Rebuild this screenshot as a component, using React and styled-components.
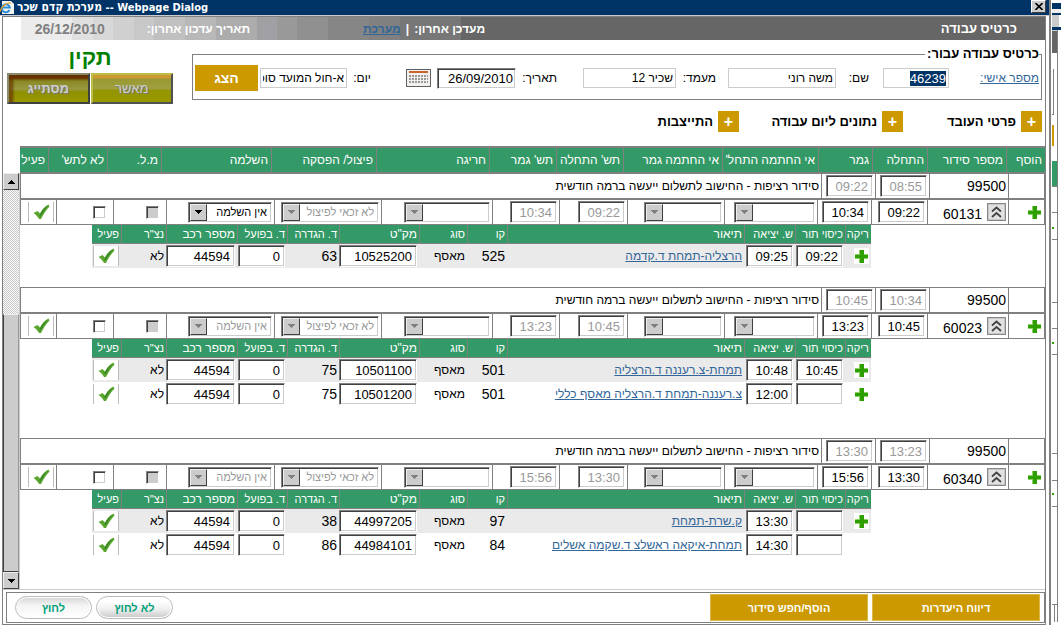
import React, { useEffect, useRef } from "react";
import styled, { createGlobalStyle } from "styled-components";

const navy = "#003366";
const green = "#339966";
const gold = "#cc9900";
const line = "#808080";
const pale = "#cccccc";
const link = "#336699";

const Global = createGlobalStyle`
  *, *::before, *::after { box-sizing: border-box; }
  html, body { margin: 0; padding: 0; background: #fff; }
  body { font-family: "Liberation Sans", Arial, sans-serif; font-size: 13px; color: #000; }
  button, input, select { font: inherit; margin: 0; border-radius: 0; }
  button { padding: 0; }
  table { border-collapse: separate; border-spacing: 0; table-layout: fixed; width: 100%; }
  ::selection { background: ${navy}; color: #fff; }
`;

const Desktop = styled.div`
  display: flex;
  min-height: 100vh;
`;

const Dialog = styled.main`
  flex: 1;
  min-width: 0;
  display: flex;
  flex-direction: column;
  border-right: 2px solid ${line};
`;

const TitleBar = styled.header`
  display: flex;
  align-items: center;
  height: 16px;
  padding: 0 3px 0 0;
  background: ${navy};
  border-bottom: 1px solid ${pale};
  color: #fff;
`;

const WindowTitle = styled.h1`
  flex: 1;
  margin: 0 0 0 2px;
  font-family: "DejaVu Sans Condensed", "Liberation Sans", sans-serif;
  font-size: 11px;
  line-height: 15px;
  font-weight: bold;
  white-space: nowrap;
`;

const SystemName = styled.span`
  font-size: 12px;
`;

const WindowButton = styled.button`
  width: 15px;
  height: 13px;
  margin-bottom: 2px;
  display: grid;
  place-items: center;
  background: ${pale};
  border: 1px solid;
  border-color: #fff #404040 #404040 #fff;
`;

const Frame = styled.div`
  flex: 1;
  display: flex;
  flex-direction: column;
  margin: 0 3px 0 2px;
  border: 1px solid ${line};
  direction: rtl;
`;

const InfoBar = styled.div`
  display: flex;
  align-items: center;
  height: 23px;
  margin-left: 18px;
  padding-right: 28px;
  color: #fff;
  font-size: 12px;
  font-weight: bold;
  white-space: nowrap;
  background: linear-gradient(
    to right,
    #ececec 0 5%, #e0e0e0 5% 7%, #d8d8d8 7% 9%, #d0d0d0 9% 11%,
    #c8c8c8 11% 13%, #c0c0c0 13% 16%, #b8b8b8 16% 19%, #acacac 19% 23%,
    #a0a0a4 23% 25%, #999 25% 27%, #909090 27% 30%, #868686 30% 34%,
    #808080 34% 37%, #777 37% 43%, #666 43%
  );
`;

const InfoTitle = styled.span`
  flex: 0 0 53%;
  font-size: 13px;
`;

const InfoEditor = styled.span`
  flex: 0 0 24%;
  display: flex;
  gap: 5px;
  padding-right: 4px;
  a { color: ${link}; }
`;

const InfoDate = styled.time`
  margin-right: 42px;
  color: ${line};
  font-size: 14px;
`;

const TopPanel = styled.section`
  display: flex;
  align-items: flex-start;
  gap: 19px;
  padding: 6px 3px 7px 4px;
`;

const Search = styled.fieldset`
  flex: 1;
  min-width: 0;
  display: flex;
  align-items: center;
  margin: 0;
  padding: 3px 2px 8px;
  border: 1px solid ${line};
`;

const Legend = styled.legend`
  padding: 0 0 0 2px;
  font-size: 13px;
  line-height: 16px;
  font-weight: bold;
`;

const Field = styled.label`
  flex: ${(p) => p.$w} 1 ${(p) => p.$w}px;
  min-width: 0;
  padding-right: ${(p) => p.$lead || 0}px;
  font-size: 12px;
  white-space: nowrap;
  a { color: ${link}; }
`;

const PlainInput = styled.input`
  flex: ${(p) => p.$w} 1 ${(p) => p.$w}px;
  width: 0;
  min-width: 0;
  height: 20px;
  padding: 0 2px;
  border: 1px solid ${pale};
  background: #fff;
  font-size: ${(p) => (p.$digits ? 13 : 12)}px;
  text-align: right;
  outline: none;
`;

const bevel = `
  border: 1px solid;
  border-color: ${line} #fff #fff ${line};
  box-shadow: inset 1px 1px #404040, inset -1px -1px ${pale};
  background: #fff;
  outline: none;
`;

const DateInput = styled(PlainInput)`
  ${bevel}
  height: 21px;
  direction: ltr;
`;

const CalendarSlot = styled.span`
  flex: 31 1 31px;
  display: flex;
  padding-right: 6px;
`;

const IconButton = styled.button`
  display: grid;
  place-items: center;
  border: 0;
  background: none;
`;

const ShowButton = styled.button`
  flex: 63 1 63px;
  height: 26px;
  margin-right: 2px;
  border: 0;
  background: ${gold};
  color: #fff;
  font-size: 14px;
  font-weight: bold;
`;

const Status = styled.div`
  flex: 0 0 166px;
`;

const StatusText = styled.strong`
  display: block;
  height: 27px;
  line-height: 24px;
  font-size: 22px;
  text-align: center;
  color: #008000;
`;

const StatusButtons = styled.div`
  display: flex;
  gap: 1px;
`;

const StatusButton = styled.button`
  flex: 1;
  height: 31px;
  border: 2px solid;
  border-color: ${(p) => (p.$pressed ? "#8a8a70 #404040 #404040 #8a8a70" : "#bdbd4a #505050 #505050 #bdbd4a")};
  background: ${(p) =>
    p.$pressed
      ? "linear-gradient(to right, #663300aa 0 3px, transparent 6px), linear-gradient(#663300 0 3px, #888822 6px, #999944 14px, #8f8f00 17px, #999900)"
      : "linear-gradient(#cc9933 0 3px, #999933 4px, #a0a040 14px, #949400 15px, #999900)"};
  color: ${pale};
  font-size: 13px;
  font-weight: ${(p) => (p.$pressed ? "bold" : "normal")};
  text-shadow: 1px 1px #777;
`;

const Sections = styled.nav`
  display: flex;
  height: 21px;
  margin: 0 3px 14px;
`;

const Section = styled.div`
  flex: 0 0 ${(p) => p.$w}px;
  display: flex;
  align-items: center;
  gap: 5px;
  font-size: 13px;
  font-weight: bold;
  white-space: nowrap;
`;

const ExpandButton = styled.button`
  width: 21px;
  height: 21px;
  border: 0;
  background: ${gold};
  color: #fff;
  font-size: 16px;
  line-height: 16px;
  font-weight: bold;
`;

const HeadWrap = styled.div`
  margin-left: 17px;
  border: 1px solid ${line};
  border-width: 1px 0 1px 1px;
`;

const HeadCell = styled.th`
  height: 25px;
  padding: 0 3px 0 0;
  background: ${green};
  border: 1px solid ${line};
  border-width: 1px 0 0 1px;
  color: #fff;
  font-size: 12px;
  font-weight: normal;
  text-align: right;
  white-space: nowrap;
  &:last-child { border-left: 0; }
`;

const Scroller = styled.div`
  flex: 1;
  display: flex;
`;

const Groups = styled.div`
  flex: 1;
  min-width: 0;
`;

const Group = styled.section`
  padding-bottom: ${(p) => p.$space}px;
`;

const Cell = styled.td`
  height: 26px;
  padding: 0 2px 0 0;
  border: 1px solid ${line};
  border-width: 1px 0 1px 1px;
  text-align: right;
  font-size: ${(p) => (p.$text ? 12 : 14)}px;
  white-space: nowrap;
  &:first-child { border-right-width: 1px; }
`;

const TimeInput = styled.input`
  ${bevel}
  display: block;
  width: ${(p) => p.$w || "47px"};
  height: 22px;
  padding: 0 4px 0 0;
  direction: ltr;
  text-align: right;
  font-size: 13px;
  &:disabled { color: #999; }
`;

const NumberCell = styled.div`
  display: flex;
  align-items: flex-end;
  gap: 5px;
  line-height: 14px;
`;

const SelectBox = styled.span`
  position: relative;
  display: block;
  width: ${(p) => p.$w}%;
`;

const Select = styled.select`
  ${bevel}
  display: block;
  width: 100%;
  height: 21px;
  padding: 0 4px 0 18px;
  appearance: none;
  font-size: 11px;
  color: #000;
  &:disabled { color: #999; opacity: 1; }
`;

const SelectArrow = styled.span`
  position: absolute;
  left: 2px;
  top: 2px;
  width: 17px;
  height: 17px;
  display: grid;
  place-items: center;
  background: ${pale};
  border: 1px solid;
  border-color: #eee #404040 #404040 #eee;
  pointer-events: none;
`;

const Tick = styled.input`
  ${bevel}
  display: block;
  appearance: none;
  width: 13px;
  height: 13px;
  margin-right: 5px;
  &:disabled { background: ${pale}; }
`;

const ActiveMark = styled.button`
  display: grid;
  place-items: center;
  width: 26px;
  height: 20px;
  background: #fff;
  border: 1px solid #bbb;
  border-width: 0 1px;
`;

const Trips = styled.div`
  padding: 0 174px 0 72px;
`;

const TripHead = styled.th`
  height: 19px;
  padding: 0 2px 0 0;
  background: ${green};
  border: 1px solid ${line};
  border-width: 0 0 1px 1px;
  color: #fff;
  font-size: ${(p) => (p.$tight ? 11 : 12)}px;
  font-weight: normal;
  text-align: right;
  white-space: nowrap;
  &:last-child { border-left: 0; }
`;

const TripRow = styled.tr`
  background: ${(p) => (p.$shaded ? "#eaeaea" : "#fff")};
`;

const TripCell = styled.td`
  height: 24px;
  padding: 0 2px 0 0;
  text-align: right;
  font-size: ${(p) => (p.$text ? 12 : 14)}px;
  white-space: nowrap;
  a { color: ${link}; }
`;

const PlusBox = styled.button`
  display: grid;
  place-items: center;
  width: 15px;
  height: 16px;
  border: 0;
  background: #fff;
`;

const ScrollBar = styled.div`
  flex: 0 0 17px;
  display: flex;
  flex-direction: column;
  border-right: 1px solid ${pale};
  background: repeating-conic-gradient(#fff 0 25%, #c4c4c4 0 50%) 0 0 / 2px 2px;
`;

const ScrollButton = styled.button`
  width: 16px;
  height: 17px;
  display: grid;
  place-items: center;
  background: ${pale};
  border: 1px solid;
  border-color: #eee #404040 #404040 #eee;
`;

const ScrollSpace = styled.div`
  flex: 125;
`;

const ScrollThumb = styled.div`
  flex: 258;
  background: ${pale};
  border: 1px solid;
  border-color: #eee #999 #404040 #404040;
`;

const Footer = styled.footer`
  border-top: 1px solid ${pale};
  padding: 2px 0 1px 3px;
`;

const FooterRow = styled.div`
  display: flex;
  align-items: center;
  gap: 4px;
  height: 31px;
  padding: 0 4px 0 8px;
  border: 1px solid ${line};
`;

const FooterButton = styled.button`
  flex: 0 0 ${(p) => p.$w}px;
  height: 27px;
  border: 1px solid #dcb84a;
  background: ${gold};
  color: #fff;
  font-size: 11px;
  font-weight: bold;
`;

const Spacer = styled.span`
  flex: 1;
`;

const PillButton = styled.button`
  width: 77px;
  height: 23px;
  border: 1px solid #bbb;
  border-radius: 12px;
  background: ${(p) =>
    p.$hot
      ? "linear-gradient(#fff 20%, #eee 60%, #c8c8c8)"
      : "linear-gradient(#d4d4d4, #f4f4f4 40%, #fff)"};
  box-shadow: inset 0 0 0 1px #fff;
  color: #00a078;
  font-size: 11px;
  font-weight: bold;
`;

const Behind = styled.aside`
  flex: 0 0 9px;
  margin-left: 1px;
  overflow: hidden;
`;

const Strip = styled.div`
  height: ${(p) => p.$h}px;
  width: ${(p) => p.$w || "100%"};
  background: ${(p) => p.$c || "#fff"};
  border-right: ${(p) => (p.$edge ? `1px solid ${line}` : "0")};
  border-bottom: ${(p) => (p.$under ? `1px solid ${line}` : "0")};
`;

const StripRow = styled.div`
  width: 6px;
  border-right: 1px solid ${line};
`;

const Arrow = ({ up, dim }) => (
  <svg width="7" height="4" viewBox="0 0 7 4" shapeRendering="crispEdges" aria-hidden="true">
    <path d={up ? "M0 4h7L3.500 0z" : "M0 0h7L3.500 4z"} fill={dim ? "#808080" : "#000"} />
  </svg>
);

const Check = () => (
  <svg width="17" height="16" viewBox="0 0 17 16" aria-hidden="true">
    <path d="M.5 9 4.500 7 7 9.500C8.500 6 11.500 2.500 15.500.5L16.500 2.500C13 6 10.500 10 8 15H6C4.500 12.500 3 10.500.5 9z" fill="#5aa52e" />
    <path d="M6.500 11C9 6.500 11.500 3.500 15 1.500 12 5 9.500 9 7 13z" fill="#36862a" />
  </svg>
);

const Plus = () => (
  <svg width="13" height="13" viewBox="0 0 13 13" shapeRendering="crispEdges" aria-hidden="true">
    <path d="M4 0h5v4h4v5H9v4H4V9H0V4h4z" fill="#8ad466" />
    <path d="M5 0h4v5h4v3H9v5H5V8H0V5h5z" fill="#2f9e00" />
  </svg>
);

const Chevrons = () => (
  <svg width="19" height="18" viewBox="0 0 19 18" aria-hidden="true">
    <rect x=".5" y=".5" width="18" height="17" fill="#e2e2e2" stroke="#888" />
    <rect x="1.500" y="1.500" width="16" height="15" fill="none" stroke="#aaa" strokeDasharray="1 1" />
    <path d="M5 8.500 9.500 4.500 14 8.500M5 14 9.500 10 14 14" fill="none" stroke="#444" strokeWidth="1.800" />
  </svg>
);

const Calendar = () => (
  <svg width="25" height="18" viewBox="0 0 25 18" shapeRendering="crispEdges" aria-hidden="true">
    <rect x=".5" y=".5" width="24" height="17" fill="#f3f0ee" stroke="#606060" />
    <path d="M3 3h19" stroke="#c86432" strokeWidth="2" />
    <path d="M3 7h19M3 10h19M3 13h19" stroke="#999" strokeWidth="2" strokeDasharray="2 1" />
  </svg>
);

const Browser = () => (
  <svg width="15" height="14" viewBox="0 0 15 14" aria-hidden="true">
    <path d="M2 0h9l3 3v10H2z" fill="#f4f4f0" />
    <path d="M9.500 9A4 4 0 1 1 9.800 6.500H3" fill="none" stroke="#2f8fd8" strokeWidth="2" />
    <path d="M0 11C1 6 6 1 11 2" fill="none" stroke="#e8a020" strokeWidth="1.200" />
  </svg>
);

const headings = [
  ["הוסף", 39], ["מספר סידור", 79], ["התחלה", 55], ["גמר", 54], ["אי החתמה התחל'", 96],
  ["אי החתמה גמר", 99], ["תש' התחלה", 67], ["תש' גמר", 67], ["חריגה", 113],
  ["פיצול/ הפסקה", 105], ["השלמה", 110], ["מ.ל.", 54], ["לא לתש'", 59], ["פעיל", 28],
];
const summaryCols = [37, 79, 54, 54, 801];
const detailCols = [37, 81, 56, 54, 93, 97, 68, 67, 111, 107, 108, 53, 57, 36];
const tripHeadings = [
  ["ריקה", 26], ["כיסוי תור", 50], ["ש. יציאה", 51], ["תיאור", 237], ["קו", 40], ["סוג", 48],
  ['מק"ט', 80], ["ד. הגדרה", 52], ["ד. בפועל", 50], ["מספר רכב", 71], ['נצ"ר', 45], ["פעיל", 29],
];

const groups = [
  {
    id: "60131", before: ["08:55", "09:22"], from: "09:22", to: "10:34", editable: true, space: 19,
    trips: [
      { plus: true, cover: "09:22", leave: "09:25", name: "הרצליה-תמחת ד.קדמה", route: "525", sku: "10525200", planned: "63" },
    ],
  },
  {
    id: "60023", before: ["10:34", "10:45"], from: "10:45", to: "13:23", space: 32,
    trips: [
      { plus: true, cover: "10:45", leave: "10:48", name: "תמחת-צ.רעננה ד.הרצליה", route: "501", sku: "10501100", planned: "75" },
      { plus: true, cover: "", leave: "12:00", name: "צ.רעננה-תמחת ד.הרצליה מאסף כללי", route: "501", sku: "10501200", planned: "75" },
    ],
  },
  {
    id: "60340", before: ["13:23", "13:30"], from: "13:30", to: "15:56", space: 19,
    trips: [
      { plus: true, cover: "", leave: "13:30", name: "ק.שרת-תמחת", route: "97", sku: "44997205", planned: "38" },
      { cover: "", leave: "14:30", name: "תמחת-איקאה ראשלצ ד.שקמה אשלים", route: "84", sku: "44984101", planned: "86" },
    ],
  },
];

const Cols = ({ widths }) => (
  <colgroup>
    {widths.map((w, i) => <col key={i} style={{ width: w }} />)}
  </colgroup>
);

const DropDown = ({ label, text = "", width, disabled = true }) => (
  <SelectBox $w={width}>
    <Select aria-label={label} disabled={disabled} defaultValue={text}>
      <option value={text}>{text}</option>
    </Select>
    <SelectArrow><Arrow dim={disabled} /></SelectArrow>
  </SelectBox>
);

const WorkGroup = ({ data }) => (
  <Group $space={data.space}>
    <table>
      <Cols widths={summaryCols} />
      <tbody>
        <tr>
          <Cell />
          <Cell>99500</Cell>
          <Cell><TimeInput aria-label="התחלה" disabled defaultValue={data.before[0]} /></Cell>
          <Cell><TimeInput aria-label="גמר" disabled defaultValue={data.before[1]} /></Cell>
          <Cell $text>סידור רציפות - החישוב לתשלום ייעשה ברמה חודשית</Cell>
        </tr>
      </tbody>
    </table>
    <table>
      <Cols widths={detailCols} />
      <tbody>
        <tr>
          <Cell><PlusBox aria-label="הוסף"><Plus /></PlusBox></Cell>
          <Cell>
            <NumberCell>
              <IconButton aria-label="צמצם"><Chevrons /></IconButton>
              <span>{data.id}</span>
            </NumberCell>
          </Cell>
          <Cell><TimeInput aria-label="התחלה" defaultValue={data.from} /></Cell>
          <Cell><TimeInput aria-label="גמר" defaultValue={data.to} /></Cell>
          <Cell><DropDown label="אי החתמה התחלה" width={90} /></Cell>
          <Cell><DropDown label="אי החתמה גמר" width={83} /></Cell>
          <Cell><TimeInput aria-label="תשלום התחלה" disabled defaultValue={data.from} /></Cell>
          <Cell><TimeInput aria-label="תשלום גמר" disabled defaultValue={data.to} /></Cell>
          <Cell><DropDown label="חריגה" width={80} /></Cell>
          <Cell><DropDown label="פיצול/ הפסקה" text="לא זכאי לפיצול" width={94} /></Cell>
          <Cell><DropDown label="השלמה" text="אין השלמה" width={80} disabled={!data.editable} /></Cell>
          <Cell><Tick type="checkbox" aria-label="מ.ל." disabled /></Cell>
          <Cell><Tick type="checkbox" aria-label="לא לתשלום" /></Cell>
          <Cell><ActiveMark aria-label="פעיל"><Check /></ActiveMark></Cell>
        </tr>
      </tbody>
    </table>
    <Trips>
      <table>
        <Cols widths={tripHeadings.map((h) => h[1])} />
        <thead>
          <tr>{tripHeadings.map(([t, w]) => <TripHead key={t} scope="col" $tight={w < 53}>{t}</TripHead>)}</tr>
        </thead>
        <tbody>
          {data.trips.map((t, i) => (
            <TripRow key={t.sku} $shaded={i === 0}>
              <TripCell>{t.plus && <PlusBox aria-label="ריקה"><Plus /></PlusBox>}</TripCell>
              <TripCell><TimeInput aria-label="כיסוי תור" defaultValue={t.cover} /></TripCell>
              <TripCell><TimeInput aria-label="שעת יציאה" defaultValue={t.leave} /></TripCell>
              <TripCell $text><a href="#trip">{t.name}</a></TripCell>
              <TripCell>{t.route}</TripCell>
              <TripCell $text>מאסף</TripCell>
              <TripCell><TimeInput aria-label="מקט" $w="100%" defaultValue={t.sku} /></TripCell>
              <TripCell>{t.planned}</TripCell>
              <TripCell><TimeInput aria-label="דקות בפועל" defaultValue="0" /></TripCell>
              <TripCell><TimeInput aria-label="מספר רכב" $w="100%" defaultValue="44594" /></TripCell>
              <TripCell $text>לא</TripCell>
              <TripCell><ActiveMark aria-label="פעיל"><Check /></ActiveMark></TripCell>
            </TripRow>
          ))}
        </tbody>
      </table>
    </Trips>
  </Group>
);

export default function App() {
  const idInput = useRef(null);
  useEffect(() => {
    idInput.current.focus();
    idInput.current.select();
  }, []);

  return (
    <Desktop>
      <Global />
      <Dialog>
        <TitleBar>
          <Browser />
          <WindowTitle><SystemName>מערכת קדם שכר</SystemName> -- Webpage Dialog</WindowTitle>
          <WindowButton aria-label="סגור">
            <svg width="8" height="7" viewBox="0 0 8 7" aria-hidden="true">
              <path d="M.5 0 7.500 7M7.500 0 .5 7" stroke="#000" strokeWidth="1.600" />
            </svg>
          </WindowButton>
        </TitleBar>
        <Frame>
          <InfoBar>
            <InfoTitle>כרטיס עבודה</InfoTitle>
            <InfoEditor>
              <span>מעדכן אחרון:</span>
              <span>|</span>
              <a href="#system">מערכת</a>
            </InfoEditor>
            <span>תאריך עדכון אחרון:</span>
            <InfoDate>26/12/2010</InfoDate>
          </InfoBar>

          <TopPanel>
            <Search>
              <Legend>כרטיס עבודה עבור:</Legend>
              <Field as="span" $w={90}><a href="#id">מספר אישי:</a></Field>
              <PlainInput ref={idInput} aria-label="מספר אישי" $digits $w={66} defaultValue="46239" />
              <Field htmlFor="name" $w={47} $lead={14}>שם:</Field>
              <PlainInput id="name" $w={108} defaultValue="משה רוני" />
              <Field htmlFor="grade" $w={52} $lead={12}>מעמד:</Field>
              <PlainInput id="grade" $w={93} defaultValue="שכיר 12" />
              <Field htmlFor="date" $w={67} $lead={26}>תאריך:</Field>
              <DateInput id="date" $digits $w={79} defaultValue="26/09/2010" />
              <CalendarSlot>
                <IconButton type="button" aria-label="לוח שנה"><Calendar /></IconButton>
              </CalendarSlot>
              <Field htmlFor="day" $w={59} $lead={35}>יום:</Field>
              <PlainInput id="day" $w={87} defaultValue="א-חול המועד סוכות" />
              <ShowButton type="button">הצג</ShowButton>
            </Search>
            <Status>
              <StatusText>תקין</StatusText>
              <StatusButtons>
                <StatusButton type="button">מאשר</StatusButton>
                <StatusButton type="button" $pressed>מסתייג</StatusButton>
              </StatusButtons>
            </Status>
          </TopPanel>

          <Sections>
            <Section $w={139}><ExpandButton aria-label="הרחב פרטי העובד">+</ExpandButton>פרטי העובד</Section>
            <Section $w={164}><ExpandButton aria-label="הרחב נתונים ליום עבודה">+</ExpandButton>נתונים ליום עבודה</Section>
            <Section $w={100}><ExpandButton aria-label="הרחב התייצבות">+</ExpandButton>התייצבות</Section>
          </Sections>

          <HeadWrap>
            <table>
              <Cols widths={headings.map((h) => h[1])} />
              <thead>
                <tr>{headings.map(([t]) => <HeadCell key={t} scope="col">{t}</HeadCell>)}</tr>
              </thead>
            </table>
          </HeadWrap>

          <Scroller>
            <Groups>
              {groups.map((g) => <WorkGroup key={g.id} data={g} />)}
            </Groups>
            <ScrollBar>
              <ScrollButton aria-label="גלול למעלה"><Arrow up /></ScrollButton>
              <ScrollSpace />
              <ScrollThumb />
              <ScrollButton aria-label="גלול למטה"><Arrow /></ScrollButton>
            </ScrollBar>
          </Scroller>

          <Footer>
            <FooterRow>
              <FooterButton type="button" $w={168}>דיווח היעדרות</FooterButton>
              <FooterButton type="button" $w={158}>הוסף/חפש סידור</FooterButton>
              <Spacer />
              <PillButton type="button" $hot>לא לחוץ</PillButton>
              <PillButton type="button">לחוץ</PillButton>
            </FooterRow>
          </Footer>
        </Frame>
      </Dialog>
      <Behind aria-hidden="true">
        <Strip $h={3} />
        <Strip $h={6} $c={navy} />
        <Strip $h={4} $c="#eee" />
        <Strip $h={2} $c={navy} />
        <Strip $h={12} $w="7px" $c={pale} />
        <Strip $h={3} $c={navy} />
        <StripRow>
          <Strip $h={1} $c={pale} />
          <Strip $h={22} $c="#666" />
          <Strip $h={16} />
          <Strip $h={46} $w="2px" $edge $under />
          <Strip $h={10} />
          <Strip $h={21} $w="2px" $c={gold} />
          <Strip $h={15} />
          <Strip $h={26} $c={green} $under />
          <Strip $h={26} $under />
          <Strip $h={14} />
          <Strip $h={2} $w="2px" $c="#2f9e00" />
          <Strip $h={11} $under />
          <Strip $h={63} $under />
          <Strip $h={26} $under />
          <Strip $h={13} />
          <Strip $h={2} $w="2px" $c="#2f9e00" />
          <Strip $h={11} $under />
          <Strip $h={99} $under />
          <Strip $h={27} $under />
          <Strip $h={12} />
          <Strip $h={2} $w="2px" $c="#2f9e00" />
          <Strip $h={12} $under />
          <Strip $h={98} $under />
          <Strip $h={17} $w="3px" $edge />
        </StripRow>
      </Behind>
    </Desktop>
  );
}
